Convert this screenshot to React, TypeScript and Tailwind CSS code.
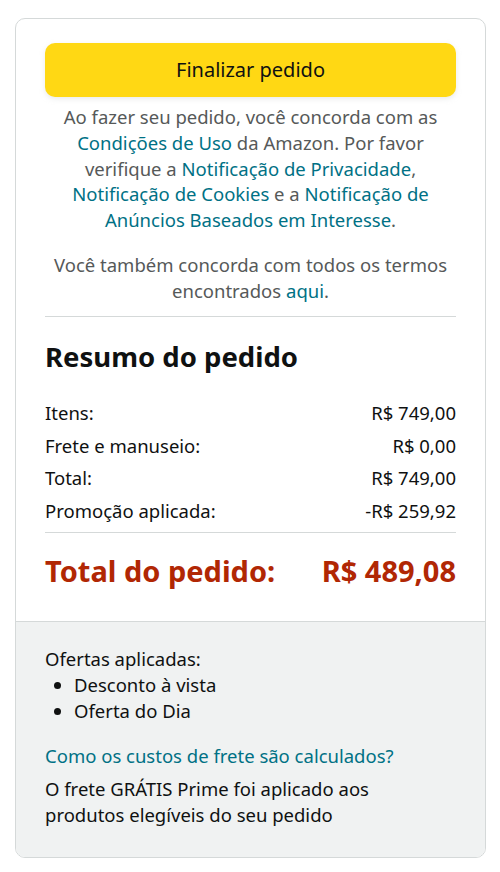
export default function App() {
  const linhas = [
    { label: "Itens:", valor: "R$ 749,00" },
    { label: "Frete e manuseio:", valor: "R$ 0,00" },
    { label: "Total:", valor: "R$ 749,00" },
    { label: "Promoção aplicada:", valor: "-R$ 259,92" },
  ];

  return (
    <div className="min-h-screen bg-white pt-[18px] px-[15px] pb-[15px]" style={{ fontFamily: '"Noto Sans", Arial, sans-serif' }}>
      <div className="w-[471px] border border-[#d5d9d9] rounded-[10px] overflow-hidden text-[#0f1111]">
        {/* Topo */}
        <div className="px-[29px] pt-[24px] pb-[32px]">
          <button className="w-full h-[54px] bg-[#ffd814] rounded-[10px] shadow-[0_2px_5px_rgba(213,217,217,0.5)] text-[20px] text-[#0f1111]">
            Finalizar pedido
          </button>

          <p className="mt-[7px] text-center text-[18.5px] leading-[25.75px] text-[#565959]">
            Ao fazer seu pedido, você concorda com as{" "}
            <span className="text-[#007185]">Condições de Uso</span> da Amazon. Por favor verifique a{" "}
            <span className="text-[#007185]">Notificação de Privacidade</span>,{" "}
            <span className="text-[#007185]">Notificação de Cookies</span> e a{" "}
            <span className="text-[#007185]">Notificação de Anúncios Baseados em Interesse</span>.
          </p>
          <p className="mt-[19px] text-center text-[18.5px] leading-[25.75px] text-[#565959]">
            Você também concorda com todos os termos encontrados <span className="text-[#007185]">aqui</span>.
          </p>

          <div className="mt-[13px] border-t border-[#d5d9d9]" />

          {/* Resumo */}
          <h2 className="mt-[22px] text-[27.5px] font-bold leading-[36px]">Resumo do pedido</h2>

          <div className="mt-[22px] flex flex-col">
            {linhas.map((l) => (
              <div key={l.label} className="flex justify-between text-[18.5px] leading-[32.6px]">
                <span>{l.label}</span>
                <span>{l.valor}</span>
              </div>
            ))}
          </div>

          <div className="mt-[4px] border-t border-[#d5d9d9]" />

          <div className="mt-[20px] flex justify-between text-[29px] font-bold leading-[36px] text-[#b12704]">
            <span>Total do pedido:</span>
            <span>R$ 489,08</span>
          </div>
        </div>

        {/* Rodapé cinza */}
        <div className="bg-[#f0f2f2] border-t border-[#d5d9d9] px-[29px] pt-[24px] pb-[29px] text-[18.5px] leading-[26px]">
          <p>Ofertas aplicadas:</p>
          <ul className="list-disc pl-[29px]">
            <li>Desconto à vista</li>
            <li>Oferta do Dia</li>
          </ul>
          <p className="mt-[19px] text-[#007185]">Como os custos de frete são calculados?</p>
          <p className="mt-[7px] max-w-[370px]">O frete GRÁTIS Prime foi aplicado aos produtos elegíveis do seu pedido</p>
        </div>
      </div>
    </div>
  );
}
